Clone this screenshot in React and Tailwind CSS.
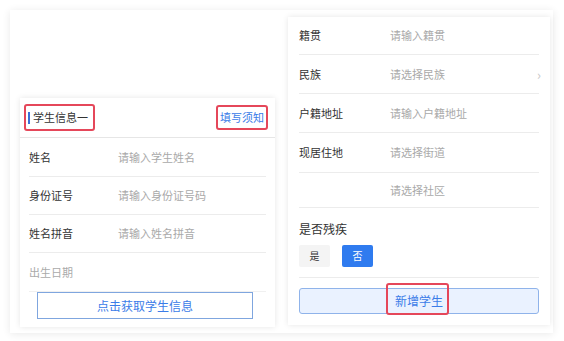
const font = { fontFamily: '"Noto Sans CJK SC", "Noto Sans", sans-serif' }

function Row({ label, placeholder, chevron, className = '' }) {
  return (
    <div className={`flex items-center border-b border-[#ececec] ${className}`}>
      <span className="w-[91px] text-[#333]">{label}</span>
      <span className="flex-1 text-[#a9a9a9]">{placeholder}</span>
      {chevron && <span className="text-[#c8c8c8] text-[13px] -mr-[2px]">›</span>}
    </div>
  )
}

function LeftRow({ label, placeholder, className = '' }) {
  return (
    <div className={`flex items-center border-b border-[#ececec] ${className}`}>
      <span className="w-[89px] text-[#333]">{label}</span>
      <span className="text-[#a9a9a9]">{placeholder}</span>
    </div>
  )
}

export default function App() {
  return (
    <div className="w-[564px] h-[341px] bg-white pt-[10px] pl-[10px] text-[11px] leading-none" style={font}>
      <div className="w-[543px] h-[323px] bg-white shadow-[0_1px_8px_rgba(0,0,0,0.09)] flex">

        {/* left column */}
        <div className="pl-[10px] pt-[88px]">
          <div className="w-[255px] h-[229px] bg-white shadow-[0_0_6px_rgba(0,0,0,0.10)] flex flex-col">
            <div className="h-[40px] flex items-center justify-between px-[4px] border-b border-[#e6e6e6]">
              <div className="h-[27px] w-[71px] border-2 border-[#e5475a] rounded-[3px] flex items-center pl-[2px] gap-[3px]">
                <span className="w-[2px] h-[12px] bg-[#3a6fd8]" />
                <span className="text-[#333]">学生信息一</span>
              </div>
              <div className="h-[25px] w-[52px] border-2 border-[#e5475a] rounded-[3px] flex items-center justify-center mr-[3px]">
                <span className="text-[#3b7ce8]">填写须知</span>
              </div>
            </div>
            <div className="px-[9px] flex flex-col">
              <LeftRow label="姓名" placeholder="请输入学生姓名" className="h-[39px]" />
              <LeftRow label="身份证号" placeholder="请输入身份证号码" className="h-[38px]" />
              <LeftRow label="姓名拼音" placeholder="请输入姓名拼音" className="h-[38px]" />
              <div className="h-[39px] flex items-center border-b border-[#f0f0f0] text-[#aaa]">出生日期</div>
            </div>
            <div className="pl-[17px] pr-[22px]">
              <div className="h-[27px] border border-[#7fa6df] flex items-center justify-center text-[#3b7ce8] text-[12px]">
                点击获取学生信息
              </div>
            </div>
          </div>
        </div>

        {/* right card */}
        <div className="ml-[13px] mt-[7px] w-[262px] h-[308px] bg-white shadow-[0_0_6px_rgba(0,0,0,0.10)] px-[11px] flex flex-col">
          <Row label="籍贯" placeholder="请输入籍贯" className="h-[38px]" />
          <Row label="民族" placeholder="请选择民族" chevron className="h-[39px]" />
          <Row label="户籍地址" placeholder="请输入户籍地址" className="h-[39px]" />
          <Row label="现居住地" placeholder="请选择街道" className="h-[40px]" />
          <Row label="" placeholder="请选择社区" className="h-[35px]" />
          <div className="h-[70px] border-b border-[#ececec] flex flex-col pt-[15px]">
            <span className="text-[#333] text-[12px]">是否残疾</span>
            <div className="flex gap-[12px] mt-[10px]">
              <div className="w-[31px] h-[22px] bg-[#f4f4f4] rounded-[2px] flex items-center justify-center text-[#333] text-[10px]">是</div>
              <div className="w-[31px] h-[22px] bg-[#2f7bef] rounded-[2px] flex items-center justify-center text-white text-[10px]">否</div>
            </div>
          </div>
          <div className="mt-[10px] h-[26px] bg-[#eaf2ff] border border-[#8fb3ea] rounded-[3px] flex items-center justify-center relative">
            <div className="absolute left-[86px] -top-[6px] w-[63px] h-[32px] border-2 border-[#e5475a] rounded-[3px]" />
            <span className="text-[#3b7ce8] text-[12px]">新增学生</span>
          </div>
        </div>

      </div>
    </div>
  )
}
